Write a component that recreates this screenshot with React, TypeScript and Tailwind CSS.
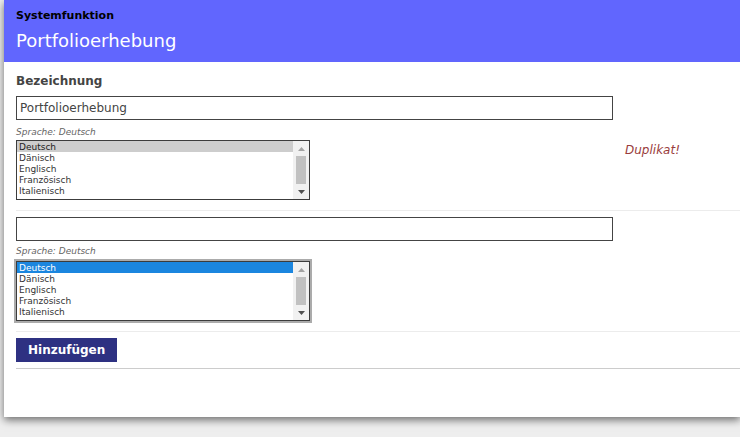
import React from 'react';

const LANGUAGES = ['Deutsch', 'Dänisch', 'Englisch', 'Französisch', 'Italienisch'];

function ListBox({ focused }: { focused?: boolean }) {
  return (
    <div
      className={
        'flex h-[60px] w-[294px] border border-[#3c3c3c] bg-white ' +
        (focused ? 'ring-2 ring-[#ababab]' : '')
      }
    >
      <div className="flex-1">
        {LANGUAGES.map((lang, i) => (
          <div
            key={lang}
            className={
              'h-[11px] pl-[2px] pt-[1px] text-[9px] leading-[11px] ' +
              (i === 0
                ? focused
                  ? 'bg-[#1b86df] text-white'
                  : 'bg-[#cdcdcd] text-[#222]'
                : 'text-[#333]')
            }
          >
            {lang}
          </div>
        ))}
      </div>
      {/* scrollbar */}
      <div className="flex w-[16px] flex-col bg-[#f1f1f1]">
        <div className="flex h-[15px] items-center justify-center">
          <svg width="7" height="4" viewBox="0 0 7 4">
            <polygon points="3.5,0 7,4 0,4" fill="#a3a3a3" />
          </svg>
        </div>
        <div className="mx-[3px] h-[28px] bg-[#c1c1c1]" />
        <div className="flex h-[15px] items-center justify-center">
          <svg width="7" height="4" viewBox="0 0 7 4">
            <polygon points="0,0 7,0 3.5,4" fill="#505050" />
          </svg>
        </div>
      </div>
    </div>
  );
}

export default function App() {
  return (
    <div className="min-h-screen bg-[#eeeeee] font-['DejaVu_Sans',Verdana,sans-serif]">
      <div className="ml-[4px] bg-white pb-[48px] shadow-[0_3px_8px_rgba(0,0,0,0.55)]">
        <header className="h-[62px] bg-[#6166fe] px-3 pt-[9px]">
          <div className="text-[11px] font-bold leading-[13px] text-black">Systemfunktion</div>
          <div className="mt-[8px] text-[18px] leading-[22px] text-white">Portfolioerhebung</div>
        </header>

        <div className="pl-3 pt-[12px]">
          <h2 className="text-[12px] font-bold leading-[15px] text-[#444]">Bezeichnung</h2>

          {/* Eintrag 1 */}
          <div className="mt-[7px] h-[24px] w-[597px] border border-[#444] pl-[3px] text-[12px] leading-[22px] text-[#444]">
            Portfolioerhebung
          </div>
          <div className="mt-[7px] text-[9px] italic leading-[11px] text-[#666]">Sprache: Deutsch</div>
          <div className="mt-[2px] flex">
            <div className="w-[597px]">
              <ListBox />
            </div>
            <div className="ml-[12px] mt-[3px] text-[12px] italic leading-[15px] text-[#993c3c]">Duplikat!</div>
          </div>

          <div className="mt-[10px] h-px bg-[#ececec]" />

          {/* Eintrag 2 */}
          <div className="mt-[6px] h-[24px] w-[597px] border border-[#444] pl-[3px] text-[12px] leading-[22px] text-[#444]" />
          <div className="mt-[5px] text-[9px] italic leading-[11px] text-[#666]">Sprache: Deutsch</div>
          <div className="mt-[4px]">
            <ListBox focused />
          </div>

          <div className="mt-[10px] h-px bg-[#ececec]" />

          <button className="mt-[6px] h-[24px] bg-[#2e3182] px-[12px] text-[12px] font-bold leading-[24px] text-white">
            Hinzufügen
          </button>

          <div className="mt-[6px] h-px bg-[#cccccc]" />
        </div>
      </div>
    </div>
  );
}
